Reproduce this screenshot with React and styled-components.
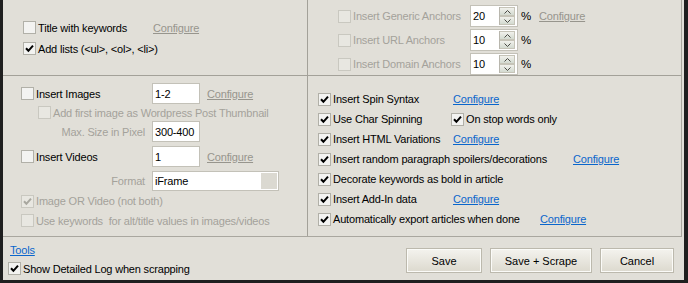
import React from 'react';
import styled, { createGlobalStyle } from 'styled-components';

const Global = createGlobalStyle`
  html, body { margin: 0; padding: 0; background: #1f1f1f; }
  body { font-family: "Liberation Sans", Arial, sans-serif; font-size: 11px; letter-spacing: -0.18px; color: #000; }
  #root { width: 688px; height: 283px; }
`;

const Window = styled.div`
  width: 688px;
  height: 283px;
  box-sizing: border-box;
  border-left: 3px solid #1f1f1f;
  border-right: 4px solid #1f1f1f;
  border-bottom: 3px solid #1f1f1f;
  background: #e1dfd8;
  display: flex;
  flex-direction: column;
  overflow: hidden;
`;

const Panel = styled.div`
  height: 237px;
  margin-right: 2px;
  box-sizing: border-box;
  border-right: 1px solid #a9a79f;
  border-bottom: 1px solid #a9a79f;
  display: grid;
  grid-template-columns: 305px 1fr;
  grid-template-rows: 76px 1fr;
`;

const Group = styled.div`
  position: relative;
  box-sizing: border-box;
  display: flex;
  flex-direction: column;
  padding: ${p => p.$pad};
  border-bottom: ${p => (p.$top ? '1px solid #a3a199' : 'none')};
  border-right: ${p => (p.$divider ? '1px solid #a3a199' : 'none')};
  overflow: hidden;
`;

const BottomRight = styled(Group)`
  overflow: visible;
  &::before {
    content: '';
    position: absolute;
    left: -1px;
    top: 0;
    width: 1px;
    height: 137px;
    background: #a3a199;
  }
`;

const Row = styled.div`
  display: flex;
  align-items: center;
  height: ${p => p.$h}px;
  margin-top: ${p => p.$mt || 0}px;
  padding-left: ${p => p.$indent || 0}px;
  flex-shrink: 0;
`;

const Box = styled.span`
  width: 13px;
  height: 13px;
  box-sizing: border-box;
  flex-shrink: 0;
  border: 1px solid ${p => (p.$disabled ? '#c9c8c0' : '#b1b0a8')};
  background: ${p => (p.$disabled ? '#e8e7e1' : '#f3f3f1')};
  display: flex;
  align-items: center;
  justify-content: center;
  margin-left: ${p => p.$ml || 0}px;
`;

const Label = styled.span`
  margin-left: 2px;
  white-space: nowrap;
  color: ${p => (p.$disabled ? '#a4a29b' : '#000')};
  width: ${p => (p.$w ? `${p.$w}px` : 'auto')};
  flex-shrink: 0;
`;

const Caption = styled.span`
  width: ${p => p.$w}px;
  text-align: right;
  color: #a4a29b;
  margin-right: 7px;
  flex-shrink: 0;
  white-space: nowrap;
`;

const Link = styled.span`
  color: ${p => (p.$disabled ? '#97958d' : '#0a66cc')};
  text-decoration: underline;
  margin-left: ${p => p.$ml || 0}px;
  white-space: nowrap;
  cursor: pointer;
`;

const Field = styled.div`
  position: relative;
  width: ${p => p.$w}px;
  height: ${p => p.$h || 21}px;
  box-sizing: border-box;
  border: 1px solid #c3c1b8;
  background: #fff;
  padding-left: 2px;
  display: flex;
  align-items: center;
  flex-shrink: 0;
  color: #000;
  font-size: 11px;
`;

const Spinner = styled.div`
  position: absolute;
  right: 2px;
  top: 1px;
  bottom: 1px;
  width: 15px;
  display: flex;
  flex-direction: column;
  border-left: 1px solid #b8b6ad;
`;

const SpinBtn = styled.div`
  flex: 1;
  display: flex;
  align-items: center;
  justify-content: center;
  background: linear-gradient(#f1f1ec, #d3dad0);
  border: 1px solid #c6c4b8;
  border-left: none;
`;

const DropBtn = styled.div`
  position: absolute;
  right: 1px;
  top: 1px;
  bottom: 1px;
  width: 16px;
  background: #dbd9d1;
`;

const Percent = styled.span`
  margin-left: 3px;
  font-size: 11.5px;
`;

const Footer = styled.div`
  flex: 1;
  display: flex;
  justify-content: space-between;
  padding: 0 10px 0 5px;
`;

const FooterLeft = styled.div`
  display: flex;
  flex-direction: column;
  padding-top: 6px;
`;

const ToolsLink = styled(Link)`
  margin-left: 2px;
  height: 14px;
  line-height: 14px;
`;

const Buttons = styled.div`
  display: flex;
  gap: 8px;
  padding-top: 11px;
`;

const Button = styled.button`
  width: ${p => p.$w}px;
  height: 25px;
  box-sizing: border-box;
  border: 1px solid #bcb9ad;
  box-shadow: inset 0 0 0 1px #fbfbf8;
  background: linear-gradient(#f4f3ee, #dcd9ce);
  font-family: "Liberation Sans", Arial, sans-serif;
  font-size: 11px;
  letter-spacing: 0;
  color: #000;
  padding: 0;
`;

const CheckMark = ({ disabled }) => (
  <svg width="9" height="9" viewBox="0 0 9 9">
    <path d="M1 4.3 L3.4 6.8 L8 1.6" fill="none" stroke={disabled ? '#a8a79f' : '#000'} strokeWidth="2" />
  </svg>
);

const Check = ({ checked, disabled, ml }) => (
  <Box $disabled={disabled} $ml={ml}>
    {checked && <CheckMark disabled={disabled} />}
  </Box>
);

const SpinField = ({ value }) => (
  <Field $w={48} $h={22}>
    {value}
    <Spinner>
      <SpinBtn>
        <svg width="7" height="4" viewBox="0 0 7 4"><path d="M0.5 3.5 L3.5 0.5 L6.5 3.5" fill="none" stroke="#4a4a44" strokeWidth="1" /></svg>
      </SpinBtn>
      <SpinBtn>
        <svg width="7" height="4" viewBox="0 0 7 4"><path d="M0.5 0.5 L3.5 3.5 L6.5 0.5" fill="none" stroke="#4a4a44" strokeWidth="1" /></svg>
      </SpinBtn>
    </Spinner>
  </Field>
);

const anchors = [
  { label: 'Insert Generic Anchors', value: '20', configure: true },
  { label: 'Insert URL Anchors', value: '10' },
  { label: 'Insert Domain Anchors', value: '10' },
];

const options = [
  { label: 'Insert Spin Syntax', w: 120, configure: true },
  { label: 'Use Char Spinning', w: 118, extra: 'On stop words only' },
  { label: 'Insert HTML Variations', w: 120, configure: true },
  { label: 'Insert random paragraph spoilers/decorations', w: 240, configure: true },
  { label: 'Decorate keywords as bold in article' },
  { label: 'Insert Add-In data', w: 120, configure: true },
  { label: 'Automatically export articles when done', w: 207, configure: true },
];

export default function App() {
  return (
    <>
      <Global />
      <Window>
        <Panel>
          <Group $top $divider $pad="17px 0 0 20px">
            <Row $h={21}>
              <Check />
              <Label $w={115}>Title with keywords</Label>
              <Link $disabled>Configure</Link>
            </Row>
            <Row $h={21}>
              <Check checked />
              <Label>Add lists (&lt;ul&gt;, &lt;ol&gt;, &lt;li&gt;)</Label>
            </Row>
          </Group>

          <Group $top $pad="4px 0 0 30px">
            {anchors.map((a, i) => (
              <Row key={i} $h={24}>
                <Check disabled />
                <Label $disabled $w={117}>{a.label}</Label>
                <SpinField value={a.value} />
                <Percent>%</Percent>
                {a.configure && <Link $disabled $ml={8}>Configure</Link>}
              </Row>
            ))}
          </Group>

          <Group $divider $pad="7px 0 0 18px">
            <Row $h={21}>
              <Check />
              <Label $w={116}>Insert Images</Label>
              <Field $w={48}>1-2</Field>
              <Link $disabled $ml={7}>Configure</Link>
            </Row>
            <Row $h={17} $indent={17}>
              <Check disabled />
              <Label $disabled>Add first image as Wordpress Post Thumbnail</Label>
            </Row>
            <Row $h={21}>
              <Caption $w={124}>Max. Size in Pixel</Caption>
              <Field $w={48}>300-400</Field>
            </Row>
            <Row $h={21} $mt={4}>
              <Check />
              <Label $w={116}>Insert Videos</Label>
              <Field $w={48}>1</Field>
              <Link $disabled $ml={7}>Configure</Link>
            </Row>
            <Row $h={20} $mt={4}>
              <Caption $w={124}>Format</Caption>
              <Field $w={127} $h={20}>
                iFrame
                <DropBtn />
              </Field>
            </Row>
            <Row $h={20}>
              <Check checked disabled />
              <Label $disabled>Image OR Video (not both)</Label>
            </Row>
            <Row $h={19}>
              <Check disabled />
              <Label $disabled>Use keywords&nbsp; for alt/title values in images/videos</Label>
            </Row>
          </Group>

          <BottomRight $pad="13px 0 0 10px">
            {options.map((o, i) => (
              <Row key={i} $h={20}>
                <Check checked />
                <Label $w={o.w}>{o.label}</Label>
                {o.configure && <Link>Configure</Link>}
                {o.extra && (
                  <>
                    <Check checked />
                    <Label>{o.extra}</Label>
                  </>
                )}
              </Row>
            ))}
          </BottomRight>
        </Panel>

        <Footer>
          <FooterLeft>
            <ToolsLink>Tools</ToolsLink>
            <Row $h={13} $mt={5}>
              <Check checked />
              <Label>Show Detailed Log when scrapping</Label>
            </Row>
          </FooterLeft>
          <Buttons>
            <Button $w={76}>Save</Button>
            <Button $w={102}>Save + Scrape</Button>
            <Button $w={74}>Cancel</Button>
          </Buttons>
        </Footer>
      </Window>
    </>
  );
}
